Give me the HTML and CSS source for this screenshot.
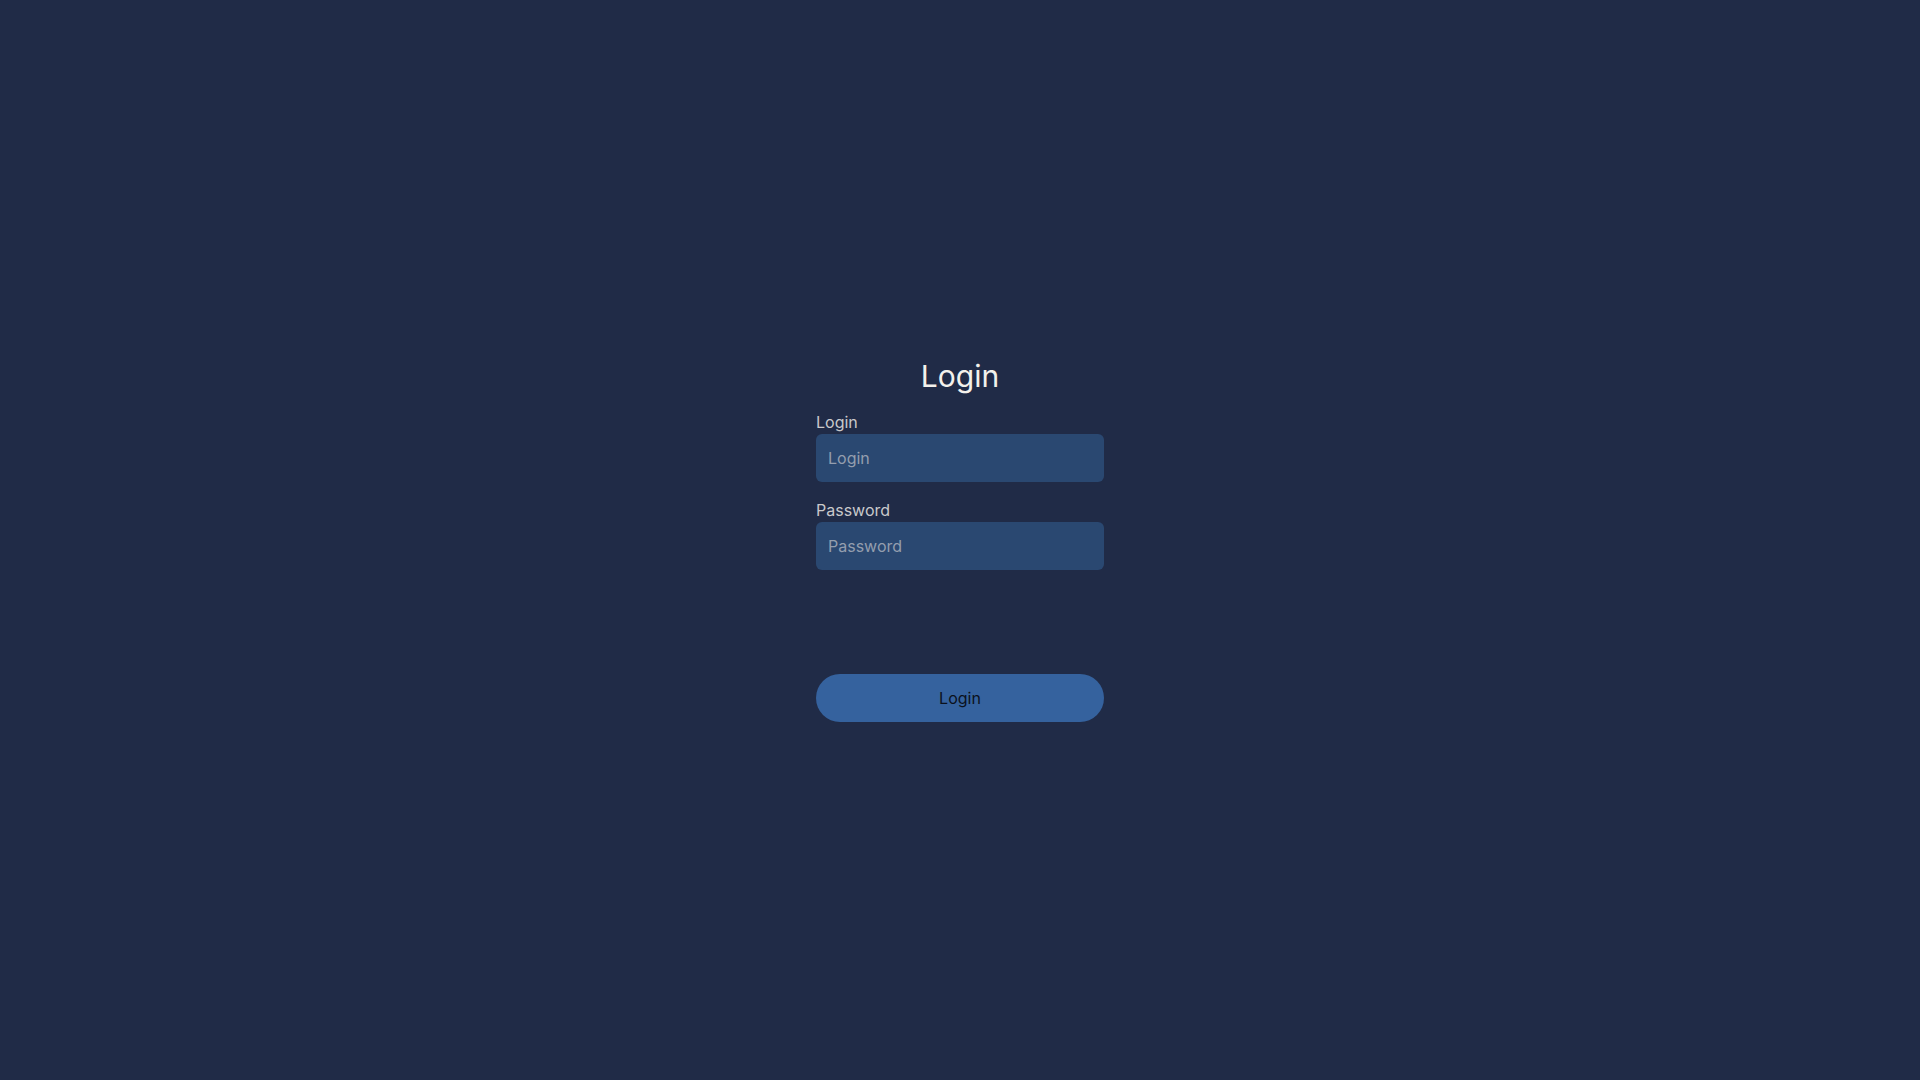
FILE: index.html
```html
<!DOCTYPE html>
<html lang="en">
<head>
  <meta charset="UTF-8">
  <meta name="viewport" content="width=device-width, initial-scale=1.0">
  <title>Login</title>
  <link rel="stylesheet" href="styles.css">
</head>
<body>
  <main class="login-page">
    <form class="login-form">
      <h1>Login</h1>

      <div class="field">
        <label for="login">Login</label>
        <input type="text" id="login" name="login" placeholder="Login">
      </div>

      <div class="field">
        <label for="password">Password</label>
        <input type="password" id="password" name="password" placeholder="Password">
      </div>

      <button type="submit" class="login-button">Login</button>
    </form>
  </main>
</body>
</html>
```

FILE: styles.css
```css
* {
  box-sizing: border-box;
}

body {
  margin: 0;
  font-family: Inter, sans-serif;
  font-size: 16px;
  line-height: 24px;
  background-color: #202b47;
  color: #f3f1ec;
}

.login-page {
  display: flex;
  align-items: center;
  justify-content: center;
  min-height: 100vh;
}

.login-form {
  display: flex;
  flex-direction: column;
  gap: 16px;
  width: 288px;
}

.login-form h1 {
  margin: 0;
  font-size: 30px;
  font-weight: 400;
  line-height: 36px;
  text-align: center;
}

.field {
  display: flex;
  flex-direction: column;
}

.field label {
  color: #c9c9cb;
}

.field input {
  height: 48px;
  padding: 12px;
  border: none;
  border-radius: 6px;
  background-color: #2a4871;
  color: #f3f1ec;
  font: inherit;
}

.field input::placeholder {
  color: #949eae;
  opacity: 1;
}

.login-button {
  height: 48px;
  margin-top: 88px;
  border: none;
  border-radius: 24px;
  background-color: #35629e;
  color: #0b111c;
  font: inherit;
  cursor: pointer;
}

.login-button:hover {
  background-color: #3d6eb0;
}
```
